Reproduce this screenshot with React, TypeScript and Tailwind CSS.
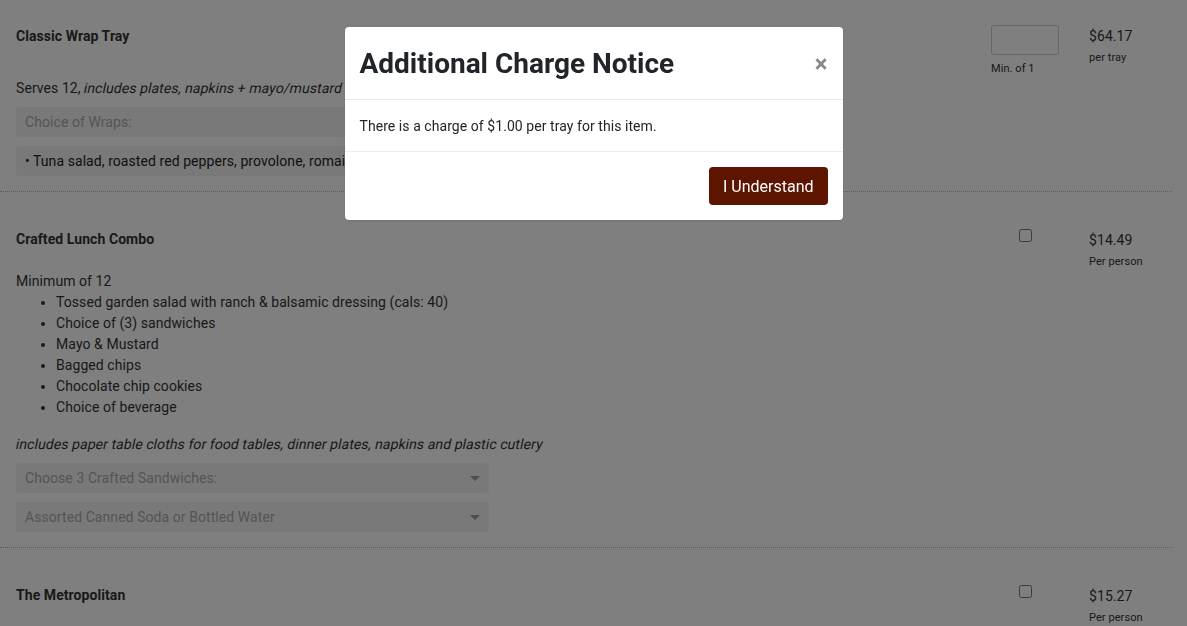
import { useState } from "react";

type Item = {
  name: string;
  price: string;
  unit: string;
};

const Caret = () => (
  <svg width="10" height="5" viewBox="0 0 10 5" className="shrink-0">
    <path d="M0 0 L10 0 L5 5 Z" fill="#9a9a9a" />
  </svg>
);

// the page renders italics as a slanted regular face
const Slant = ({ children }: { children: React.ReactNode }) => (
  <span className="inline-block -skew-x-[12deg]">{children}</span>
);

const SelectBox = ({ label, caret = true }: { label: string; caret?: boolean }) => (
  <div className="flex h-[30px] w-[473px] items-center justify-between rounded-[3px] bg-[#f3f3f3] pl-[9px] pr-[9px] text-[14px] text-[#aaa]">
    <span>{label}</span>
    {caret && <Caret />}
  </div>
);

const PriceCol = ({ item }: { item: Item }) => (
  <div className="w-[83px] shrink-0 pt-[1px]">
    <div className="text-[14px] leading-[20px] text-[#333]">{item.price}</div>
    <div className="mt-[3px] text-[11px] leading-[18px] text-[#333]">{item.unit}</div>
  </div>
);

const CheckCol = () => (
  <div className="flex w-[68px] shrink-0 justify-center">
    <input type="checkbox" className="mt-0 h-[13px] w-[13px]" />
  </div>
);

const App = () => {
  const [open, setOpen] = useState(true);

  return (
    <div className="relative min-h-[626px] bg-white font-['Roboto',sans-serif] tracking-[0.07px] text-[#333]">
      <div className="w-[1172px]">
        {/* wrap tray */}
        <div className="flex border-b border-dotted border-[#bbb] pb-[15px] pl-4 pt-[25px]">
          <div className="flex-1">
            <div className="pt-[1px] text-[14px] font-bold leading-[20px]">Classic Wrap Tray</div>
            <p className="mt-[32px] text-[14px] leading-[21px]">
              Serves 12, <Slant>includes plates, napkins + mayo/mustard</Slant>
            </p>
            <div className="mt-[8px] flex flex-col gap-[9px]">
              <SelectBox label="Choice of Wraps:" caret={false} />
              <div className="flex h-[30px] w-[473px] items-center rounded-[3px] bg-[#f3f3f3] pl-[9px] text-[14px] text-[#222]">
                • Tuna salad, roasted red peppers, provolone, romaine lettuce
              </div>
            </div>
          </div>
          <div className="w-[68px] shrink-0">
            <input className="h-[30px] w-[68px] rounded-[3px] border border-[#ccc] bg-white" />
            <div className="mt-[7px] text-[11px] leading-[14px]">Min. of 1</div>
          </div>
          <div className="w-[30px] shrink-0" />
          <PriceCol item={{ name: "", price: "$64.17", unit: "per tray" }} />
        </div>

        {/* lunch combo */}
        <div className="flex border-b border-dotted border-[#bbb] pb-[15px] pl-4 pt-[37px]">
          <div className="flex-1">
            <div className="text-[14px] font-bold leading-[20px]">Crafted Lunch Combo</div>
            <p className="mt-[22px] text-[14px] leading-[21px]">Minimum of 12</p>
            <ul className="mb-[16px] list-disc pl-[40px] text-[14px] leading-[21px]">
              <li>Tossed garden salad with ranch &amp; balsamic dressing (cals: 40)</li>
              <li>Choice of (3) sandwiches</li>
              <li>Mayo &amp; Mustard</li>
              <li>Bagged chips</li>
              <li>Chocolate chip cookies</li>
              <li>Choice of beverage</li>
            </ul>
            <p className="text-[14px] leading-[21px]">
              <Slant>includes paper table cloths for food tables, dinner plates, napkins and plastic cutlery</Slant>
            </p>
            <div className="mt-[8px] flex flex-col gap-[9px]">
              <SelectBox label="Choose 3 Crafted Sandwiches:" />
              <SelectBox label="Assorted Canned Soda or Bottled Water" />
            </div>
          </div>
          <CheckCol />
          <div className="w-[30px] shrink-0" />
          <PriceCol item={{ name: "", price: "$14.49", unit: "Per person" }} />
        </div>

        {/* metropolitan */}
        <div className="flex pb-[20px] pl-4 pt-[37px]">
          <div className="flex-1">
            <div className="text-[14px] font-bold leading-[20px]">The Metropolitan</div>
          </div>
          <CheckCol />
          <div className="w-[30px] shrink-0" />
          <PriceCol item={{ name: "", price: "$15.27", unit: "Per person" }} />
        </div>
      </div>

      {open && (
        <div className="fixed inset-0 bg-black/50">
          <div className="mx-auto mt-[27px] w-[498px] rounded-[4px] bg-white tracking-normal text-[#212529] shadow">
            <div className="flex items-center justify-between border-b border-[#e9ecef] px-[15px] pb-[15px] pt-[17px]">
              <h4 className="text-[28px] font-bold leading-[40px]">Additional Charge Notice</h4>
              <button
                onClick={() => setOpen(false)}
                className="text-[24px] font-bold leading-none text-[#888]"
              >
                ×
              </button>
            </div>
            <div className="border-b border-[#e9ecef] px-[15px] pb-[14px] pt-[16px] text-[14px] leading-[21px] tracking-[0.06px]">
              There is a charge of $1.00 per tray for this item.
            </div>
            <div className="flex justify-end px-[15px] pb-[15px] pt-[15px]">
              <button
                onClick={() => setOpen(false)}
                className="h-[38px] rounded-[4px] bg-[#5e1500] px-[14px] pt-[1px] text-[16px] text-white"
              >
                I Understand
              </button>
            </div>
          </div>
        </div>
      )}
    </div>
  );
};

export default App;
